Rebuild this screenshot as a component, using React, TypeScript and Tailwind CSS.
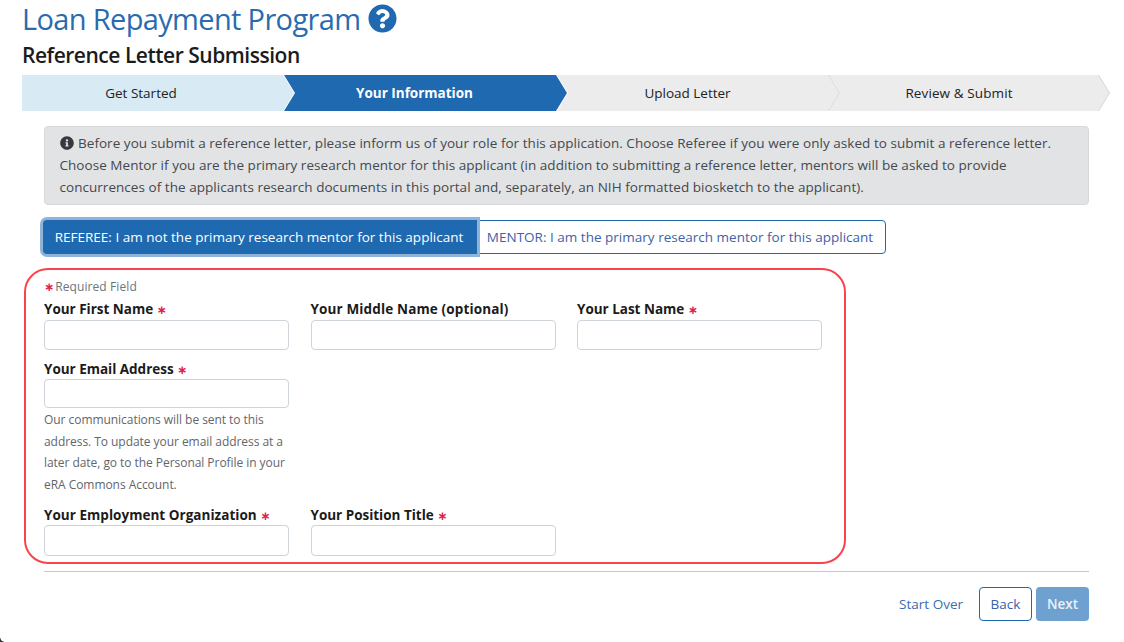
import React from "react";

const F = "font-['Open_Sans','Noto_Sans',sans-serif]";

function Star() {
  return <span className="font-['DejaVu_Sans',sans-serif] font-bold text-[#e0244f] text-[12px] leading-none">∗</span>;
}

function Field({ label, req, input = "h-[30px] mt-[1px]", t = "tracking-[-0.02px]" }: { label: string; req?: boolean; input?: string; t?: string }) {
  return (
    <div className="w-[245px]">
      <div className={`text-[13.5px] leading-[20px] font-bold text-[#1b1b1b] ${t}`}>
        {label} {req && <Star />}
      </div>
      <div className={`${input} rounded-[4px] border border-[#ced4da] bg-white`} />
    </div>
  );
}

const NOTCH = "[clip-path:polygon(0_0,calc(100%-11px)_0,100%_50%,calc(100%-11px)_100%,0_100%,11px_50%)]";

function Chevron() {
  return (
    <svg className="absolute right-0 top-0" width="12" height="36" viewBox="0 0 12 36" fill="none" stroke="#d9d9d9">
      <path d="M0.5 0L11.5 18L0.5 36" />
    </svg>
  );
}

export default function App() {
  return (
    <div className={`relative w-[1124px] h-[642px] overflow-hidden bg-white pl-[22px] ${F}`}>
      <div className="flex items-center h-[37px] text-[29px] text-[#2a6bb0] tracking-[-0.65px] leading-[37px]">
        Loan Repayment Program
        <svg className="ml-[8px]" width="29" height="29" viewBox="0 0 512 512" fill="#1e69b0">
          <path d="M504 256c0 137-111 248-248 248S8 393 8 256C8 119 119 8 256 8s248 111 248 248zM262.7 90c-54.5 0-89.3 23-116.5 63.8-3.5 5.3-2.4 12.4 2.7 16.3l34.7 26.3c5.2 3.9 12.6 3 16.7-2.1 17.9-22.7 30.1-35.8 57.3-35.8 20.4 0 45.7 13.1 45.7 33 0 15-12.4 22.7-32.6 34-23.6 13.2-54.8 29.7-54.8 70.9V302c0 6.6 5.4 12 12 12h56c6.6 0 12-5.4 12-12v-1.3c0-28.5 83.4-29.7 83.4-106.9 0-58.2-60.3-102.3-116.8-102.3zM256 338c-25.4 0-46 20.6-46 46 0 25.4 20.6 46 46 46s46-20.6 46-46c0-25.4-20.6-46-46-46z" />
        </svg>
      </div>
      <div className="mt-[3px] h-[30px] text-[21px] leading-[30px] font-semibold text-[#1b1b1b] tracking-[-0.48px]">
        Reference Letter Submission
      </div>
      <div className="mt-[5px] w-[1088px] flex h-[36px] text-[13.5px]">
        <div className="w-[272px] pr-[34px] flex items-center justify-center bg-[#d8ebf4] text-[#222] [clip-path:polygon(0_0,calc(100%-11px)_0,100%_50%,calc(100%-11px)_100%,0_100%)]">
          Get Started
        </div>
        <div className={`relative z-10 -ml-[10px] w-[283px] pr-[22px] flex items-center justify-center bg-[#1e69b0] font-bold text-white ${NOTCH}`}>
          Your Information
        </div>
        <div className="relative -ml-[10px] w-[283px]">
          <div className={`h-full pr-[22px] flex items-center justify-center bg-[#ececec] text-[#222] ${NOTCH}`}>Upload Letter</div>
          <Chevron />
        </div>
        <div className="relative -ml-[11px] w-[281px]">
          <div className={`h-full pr-[21px] flex items-center justify-center bg-[#ececec] text-[#222] tracking-[0.1px] ${NOTCH}`}>Review &amp; Submit</div>
          <Chevron />
        </div>
      </div>

      <div className="ml-[22px] mt-[15px] w-[1045px] h-[79px] rounded-[4px] border border-[#d6d8db] bg-[#e2e3e5] pl-[14.5px] pr-[15px] pt-[5px] text-[13.5px] leading-[22px] tracking-[0.04px] text-[#43494e]">
        <div>
          <svg className="inline-block mr-[4px] ml-[0.5px] -mt-[3px]" width="14" height="14" viewBox="0 0 512 512" fill="#343a40">
            <path d="M256 8C119 8 8 119 8 256s111 248 248 248 248-111 248-248S393 8 256 8zm0 110c23.2 0 42 18.8 42 42s-18.8 42-42 42-42-18.8-42-42 18.8-42 42-42zm56 254c0 6.6-5.4 12-12 12h-88c-6.6 0-12-5.4-12-12v-24c0-6.6 5.4-12 12-12h12v-64h-12c-6.6 0-12-5.4-12-12v-24c0-6.6 5.4-12 12-12h64c6.6 0 12 5.4 12 12v100h12c6.6 0 12 5.4 12 12v24z" />
          </svg>
          Before you submit a reference letter, please inform us of your role for this application. Choose Referee if you were only asked to submit a reference letter.
        </div>
        <div>Choose Mentor if you are the primary research mentor for this applicant (in addition to submitting a reference letter, mentors will be asked to provide</div>
        <div>concurrences of the applicants research documents in this portal and, separately, an NIH formatted biosketch to the applicant).</div>
      </div>

      <div className="ml-[21px] mt-[15px] flex h-[34px] text-[13.5px] tracking-[0.01px]">
        <div className="relative z-10 h-[34px] w-[434px] pr-[2px] flex items-center justify-center rounded-l-[4px] bg-[#1e69b0] text-white shadow-[0_0_0_3px_#8fb4d8]">
          REFEREE: I am not the primary research mentor for this applicant
        </div>
        <div className="h-[34px] w-[409px] pr-[3px] flex items-center justify-center rounded-r-[4px] border border-[#1e69b0] bg-white text-[#3f5fa8]">
          MENTOR: I am the primary research mentor for this applicant
        </div>
      </div>

      <div className="ml-[2px] mt-[14px] w-[822px] h-[296px] rounded-[24px] border-2 border-[#f8444c] pl-[18px] pt-[8px]">
        <div className="flex items-center gap-[1px] text-[12px] leading-[18px] text-[#6c757d] tracking-[0.1px]">
          <Star />
          <span>Required Field</span>
        </div>
        <div className="flex gap-[21.5px] mt-[3px]">
          <Field label="Your First Name" req />
          <Field label="Your Middle Name (optional)" t="tracking-[0.14px]" />
          <Field label="Your Last Name" req />
        </div>
        <div className="mt-[9px]">
          <Field label="Your Email Address" req input="h-[29px]" />
          <div className="w-[245px] mt-[1px] text-[12px] leading-[21.7px] text-[#5f666c] tracking-[-0.05px]">
            Our communications will be sent to this address. To update your email address at a later date, go to the Personal Profile in your eRA Commons Account.
          </div>
        </div>
        <div className="flex gap-[21.5px] mt-[9px]">
          <Field label="Your Employment Organization" req input="h-[31px]" t="tracking-[0.03px]" />
          <Field label="Your Position Title" req input="h-[31px]" />
        </div>
      </div>

      <div className="ml-[22px] mt-[7px] w-[1045px] border-t border-[#c8c8c8]" />
      <div className="ml-[22px] mt-[15px] w-[1045px] flex justify-end items-center text-[13.5px]">
        <span className="text-[#3a6cb0] mr-[16px]">Start Over</span>
        <div className="w-[53px] h-[34px] flex items-center justify-center rounded-[4px] border border-[#1e69b0] text-[#3a62ae] bg-white">Back</div>
        <div className="ml-[4px] w-[53px] h-[34px] flex items-center justify-center rounded-[4px] bg-[#6fa1d0] text-[#eaf1f8] font-semibold">Next</div>
      </div>
      <div className="absolute left-0 bottom-0 w-[4px] h-[4px] bg-[radial-gradient(circle_at_100%_0,transparent_3px,#333_4px)]" />
    </div>
  );
}
